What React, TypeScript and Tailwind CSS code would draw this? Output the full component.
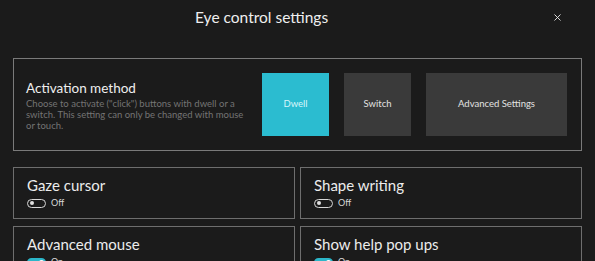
import { X } from 'lucide-react';

const font = { fontFamily: 'Lato, "Noto Sans", sans-serif' };

function Toggle({ on }: { on: boolean }) {
  if (on) {
    return (
      <span className="relative inline-block w-[19px] h-[9px] rounded-full bg-[#2bb6c9]">
        <span className="absolute right-[2px] top-[2px] w-[5px] h-[5px] rounded-full bg-white" />
      </span>
    );
  }
  return (
    <span className="relative inline-block w-[19px] h-[9px] rounded-full border border-[#d8d8d8]">
      <span className="absolute left-[2px] top-[1.5px] w-[4px] h-[4px] rounded-full bg-[#e0e0e0]" />
    </span>
  );
}

function SettingCard({ title, on }: { title: string; on: boolean }) {
  return (
    <div className="h-[52px] border border-[#6e6e6e] pl-[13px] pt-[9px]">
      <div className="text-[15px] leading-[17px] text-[#ececec]">{title}</div>
      <div className="flex items-center gap-[5px] mt-[4px]">
        <Toggle on={on} />
        <span className="text-[9px] leading-[10px] text-[#d8d8d8]">{on ? 'On' : 'Off'}</span>
      </div>
    </div>
  );
}

export default function App() {
  return (
    <div className="w-[595px] h-[261px] overflow-hidden bg-[#1b1b1b] text-white" style={font}>
      <div className="relative h-[58px]">
        <div className="absolute left-[195px] top-[6px] text-[15.5px] leading-[22px] text-[#efefef] whitespace-nowrap">Eye control settings</div>
        <X size={11} strokeWidth={2} className="absolute left-[552px] top-[12px] text-[#e8e8e8]" />
      </div>

      <div className="px-[13px]">
        <div className="flex items-center h-[93px] border border-[#7a7a7a] pl-[12px] pr-[14px]">
          <div className="flex-1 pr-[6px] pt-[2px]">
            <div className="text-[13.5px] leading-[17px] text-[#efefef]">Activation method</div>
            <div className="text-[9.5px] leading-[11px] text-[#747474] mt-[1px] w-[226px]">
              Choose to activate ("click") buttons with dwell or a switch. This setting can only be changed with mouse or touch.
            </div>
          </div>
          <div className="flex gap-[15px]">
            <button className="w-[67px] h-[63px] bg-[#2bbcd0] text-[9.5px] text-[#d9f6fb]">Dwell</button>
            <button className="w-[67px] h-[63px] bg-[#3a3a3a] text-[9.5px] text-[#e2e2e2]">Switch</button>
            <button className="w-[141px] h-[63px] bg-[#3a3a3a] text-[9.5px] text-[#e2e2e2]">Advanced Settings</button>
          </div>
        </div>

        <div className="grid grid-cols-2 gap-x-[5px] gap-y-[7px] mt-[16px]">
          <SettingCard title="Gaze cursor" on={false} />
          <SettingCard title="Shape writing" on={false} />
          <SettingCard title="Advanced mouse" on={true} />
          <SettingCard title="Show help pop ups" on={true} />
        </div>
      </div>
    </div>
  );
}
